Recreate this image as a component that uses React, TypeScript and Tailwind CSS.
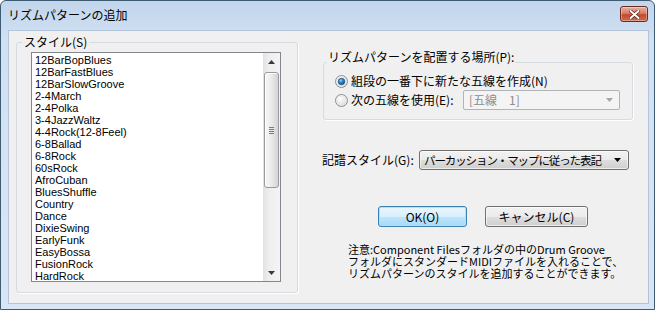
const styleNames = [
  '12BarBopBlues',
  '12BarFastBlues',
  '12BarSlowGroove',
  '2-4March',
  '2-4Polka',
  '3-4JazzWaltz',
  '4-4Rock(12-8Feel)',
  '6-8Ballad',
  '6-8Rock',
  '60sRock',
  'AfroCuban',
  'BluesShuffle',
  'Country',
  'Dance',
  'DixieSwing',
  'EarlyFunk',
  'EasyBossa',
  'FusionRock',
  'HardRock',
]

function Radio({ checked }: { checked?: boolean }) {
  return (
    <svg width="13" height="13" viewBox="0 0 13 13" className="shrink-0">
      <defs>
        <radialGradient id="rOff" cx="0.35" cy="0.3" r="0.8">
          <stop offset="0" stopColor="#ffffff" />
          <stop offset="1" stopColor="#d8d8d8" />
        </radialGradient>
        <radialGradient id="rDot" cx="0.4" cy="0.35" r="0.7">
          <stop offset="0" stopColor="#8ed0f6" />
          <stop offset="0.5" stopColor="#1f7fc4" />
          <stop offset="1" stopColor="#0b4f86" />
        </radialGradient>
      </defs>
      <circle cx="6.5" cy="6.5" r="6" fill="url(#rOff)" stroke="#8f8f8f" />
      <circle cx="6.5" cy="6.5" r="4.6" fill="none" stroke="#e6e6e6" />
      {checked && <circle cx="6.5" cy="6.5" r="3.3" fill="url(#rDot)" stroke="#1c5180" strokeWidth="0.6" />}
    </svg>
  )
}

function Arrow({ up, color = '#000' }: { up?: boolean; color?: string }) {
  return (
    <svg width="7" height="4" viewBox="0 0 7 4" className="shrink-0">
      {up ? <path d="M0 4 L3.5 0 L7 4 Z" fill={color} /> : <path d="M0 0 L7 0 L3.5 4 Z" fill={color} />}
    </svg>
  )
}

export default function App() {
  return (
    <div className="w-[655px] h-[310px] flex flex-col border border-[#3f5a73] rounded-t-[6px] bg-[linear-gradient(to_bottom,#c1d5ec,#d2e1f2_40px,#d8e5f4)] font-['Noto_Sans_CJK_JP',sans-serif] text-[12px] text-black overflow-hidden">
      {/* Title bar */}
      <div className="h-[29px] flex items-start justify-between shrink-0">
        <span className="pl-[7px] pt-[6px] leading-[16px] text-[12px]">リズムパターンの追加</span>
        <div className="mt-[5px] mr-[6px] w-[28px] h-[16px] rounded-[3px] border border-[#6b2c22] bg-[linear-gradient(to_bottom,#e6b0a3,#d77e66_45%,#c24a2e_55%,#d06a4c)] flex items-center justify-center shadow-[inset_0_0_0_1px_rgba(255,255,255,0.35)]">
          <svg width="11" height="9" viewBox="0 0 11 9">
            <path d="M1.5 1 L9.5 8 M9.5 1 L1.5 8" stroke="#5a2018" strokeWidth="3.4" strokeLinecap="round" />
            <path d="M1.5 1 L9.5 8 M9.5 1 L1.5 8" stroke="#ffffff" strokeWidth="2" strokeLinecap="round" />
          </svg>
        </div>
      </div>

      {/* Client area */}
      <div className="flex-1 ml-[7px] mr-[5px] mb-[5px] flex bg-[#f0f0f0] border border-[#b3c5da]">
        {/* Style list group */}
        <fieldset className="ml-[7px] mt-[4px] w-[282px] h-[258px] border border-[#d5dbe0] rounded-[3px] p-0 shadow-[1px_1px_0_#ffffff]">
          <legend className="ml-[5px] px-[2px] leading-[14px]">スタイル(S)</legend>
          <div className="pl-[14px] pt-[3px]">
            <div className="w-[250px] h-[230px] border border-[#828790] bg-white flex">
              <div className="flex-1 pl-[3px] pt-[1px] overflow-hidden font-['Liberation_Sans',sans-serif] text-[11px] leading-[12px]">
                {styleNames.map(name => (
                  <div key={name} className="h-[12px] whitespace-nowrap">{name}</div>
                ))}
              </div>
              {/* Scrollbar */}
              <div className="w-[17px] flex flex-col bg-[linear-gradient(to_right,#e2e2e2,#eeeeee_35%,#f4f4f4)]">
                <div className="h-[17px] flex items-center justify-center">
                  <Arrow up color="#3a3a3a" />
                </div>
                <div className="flex-1 flex flex-col">
                  <div className="mt-[2px] mx-[1px] h-[116px] rounded-[3px] border border-[#9a9a9a] bg-[linear-gradient(to_right,#f7f7f7,#ececec_45%,#d4d4d4)] shadow-[inset_1px_1px_0_#ffffff] flex flex-col items-center justify-center gap-[1px]">
                    <div className="w-[5px] h-[1px] bg-[#7a7a7a]" />
                    <div className="w-[5px] h-[1px] bg-[#7a7a7a]" />
                    <div className="w-[5px] h-[1px] bg-[#7a7a7a]" />
                    <div className="w-[5px] h-[1px] bg-[#7a7a7a]" />
                  </div>
                </div>
                <div className="h-[17px] flex items-center justify-center">
                  <Arrow color="#3a3a3a" />
                </div>
              </div>
            </div>
          </div>
        </fieldset>

        {/* Right column */}
        <div className="ml-[24px] flex flex-col">
          <fieldset className="ml-[1px] mt-[19px] w-[310px] border border-[#d5dbe0] rounded-[3px] p-0 shadow-[1px_1px_0_#ffffff]">
            <legend className="ml-[3px] px-[1px] pb-[10px] leading-[14px]">リズムパターンを配置する場所(P):</legend>
            <div className="pl-[11px] pb-[9px]">
              <div className="h-[14px] flex items-center">
                <Radio checked />
                <span className="ml-[3px] leading-[14px]">組段の一番下に新たな五線を作成(N)</span>
              </div>
              <div className="mt-[2px] h-[20px] flex items-center">
                <Radio />
                <span className="ml-[3px] w-[112px] leading-[14px]">次の五線を使用(E):</span>
                <div className="w-[157px] h-[20px] border border-[#b0b4b8] rounded-[2px] bg-[#f4f4f4] flex items-center justify-between pl-[5px] pr-[6px] text-[#8d8d8d]">
                  <span className="leading-[14px]">[五線　1]</span>
                  <Arrow color="#a6a6a6" />
                </div>
              </div>
            </div>
          </fieldset>

          <div className="mt-[30px] h-[20px] flex items-center">
            <span className="w-[97px] leading-[14px]">記譜スタイル(G):</span>
            <div className="w-[210px] h-[20px] border border-[#707070] rounded-[3px] bg-[linear-gradient(to_bottom,#f2f2f2_0%,#ebebeb_50%,#dddddd_51%,#cfcfcf_100%)] shadow-[inset_0_0_0_1px_rgba(255,255,255,0.6)] flex items-center justify-between pl-[4px] pr-[7px]">
              <span className="leading-[14px] text-[11.5px] tracking-[-1.1px] whitespace-nowrap">パーカッション・マップに従った表記</span>
              <Arrow />
            </div>
          </div>

          <div className="mt-[36px] ml-[56px] flex">
            <button className="w-[89px] h-[21px] border border-[#3c7fb1] rounded-[3px] bg-[linear-gradient(to_bottom,#eaf6fd_0%,#d9f0fc_50%,#bee6fd_51%,#a7d9f5_100%)] shadow-[inset_0_0_0_1px_#b3e0f8] leading-[14px]">
              OK(O)
            </button>
            <button className="ml-[18px] w-[103px] h-[21px] border border-[#707070] rounded-[3px] bg-[linear-gradient(to_bottom,#f2f2f2_0%,#ebebeb_50%,#dddddd_51%,#cfcfcf_100%)] shadow-[inset_0_0_0_1px_rgba(255,255,255,0.6)] leading-[14px]">
              キャンセル(C)
            </button>
          </div>

          <div className="mt-[16px] ml-[26px] text-[11px] leading-[12px] whitespace-nowrap">
            <div>注意:Component Filesフォルダの中のDrum Groove</div>
            <div>フォルダにスタンダードMIDIファイルを入れることで、</div>
            <div>リズムパターンのスタイルを追加することができます。</div>
          </div>
        </div>
      </div>
    </div>
  )
}
